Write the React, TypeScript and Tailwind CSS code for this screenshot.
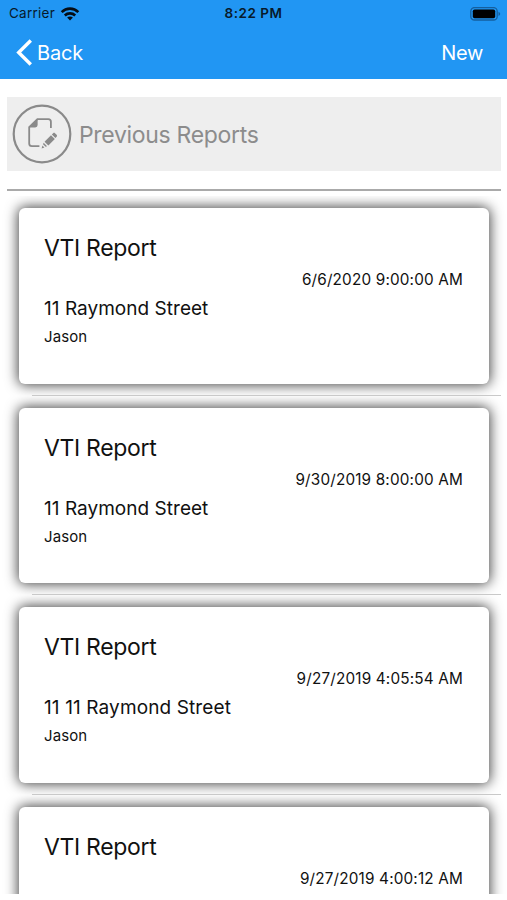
const reports = [
  { date: '6/6/2020 9:00:00 AM', address: '11 Raymond Street', inspector: 'Jason', addressClass: 'tracking-[0.03px]' },
  { date: '9/30/2019 8:00:00 AM', address: '11 Raymond Street', inspector: 'Jason', addressClass: 'tracking-[0.03px]' },
  { date: '9/27/2019 4:05:54 AM', address: '11 11 Raymond Street', inspector: 'Jason', addressClass: 'tracking-[0.12px]' },
  { date: '9/27/2019 4:00:12 AM', address: '', inspector: '', addressClass: '' },
];

function WifiIcon() {
  return (
    <svg className="ml-[5px] h-[14px] w-[20px]" viewBox="0 0 19 14" fill="none" stroke="#050d16" strokeWidth="2.6">
      <path d="M1.2 5.1C5.8.5 13.2.5 17.8 5.1" />
      <path d="M4.3 8.5c2.9-2.8 7.5-2.8 10.4 0" />
      <path d="M9.5 13.4 6.6 10.6c1.6-1.5 4.2-1.5 5.8 0z" fill="#050d16" stroke="none" />
    </svg>
  );
}

function BatteryIcon() {
  return (
    <svg className="h-[14px] w-[31px]" viewBox="0 0 31 14">
      <rect x="0.8" y="0.6" width="26.4" height="12.4" rx="3.6" fill="none" stroke="#155f9e" strokeWidth="1.3" />
      <rect x="2.8" y="2.5" width="22.4" height="8.8" rx="1.8" fill="#000" />
      <path d="M28.5 4.7c2.2.8 2.2 3.4 0 4.2z" fill="#155f9e" />
    </svg>
  );
}

function ReportIcon() {
  return (
    <svg className="h-[60px] w-[60px]" viewBox="0 0 60 60" fill="none" stroke="#8a8a8a">
      <circle cx="30" cy="30" r="28.3" strokeWidth="2.2" />
      <path d="M38.9 24V17.8a2.6 2.6 0 0 0-2.6-2.6H25.4L17.2 23.2v16.3a2.6 2.6 0 0 0 2.6 2.6h7.6" strokeWidth="1.8" />
      <path d="M25.6 15v6.1a2.4 2.4 0 0 1-2.4 2.4H17z" fill="#8a8a8a" stroke="none" />
      <g fill="#8a8a8a" stroke="none" transform="translate(6.7 5.5) scale(0.85)">
        <path d="M30.4 37.8 38 30.2l4.5 4.5-7.6 7.6z" />
        <path d="m39 29.3 1.5-1.4c.7-.7 1.6-.6 2.2 0l1.9 1.9c.7.7.7 1.6 0 2.2L43.2 33.5z" />
        <path d="m29.4 39.2 4 4-1.8.7-3-2.9z" />
        <path d="m27.9 42.3 2.3 2.3-3.2 1.2z" />
      </g>
    </svg>
  );
}

export default function App() {
  return (
    <div className="flex h-[900px] w-[507px] flex-col overflow-hidden bg-white font-['Inter','Liberation_Sans',sans-serif] text-[#111]">
      <header className="h-[79px] shrink-0 bg-[#2196f3]">
        <div className="grid h-[27px] grid-cols-3 items-center text-[13.5px] leading-[27px] text-[#071a2b]">
          <div className="flex items-center pl-[9px]">
            <span className="tracking-[0.25px]">Carrier</span>
            <WifiIcon />
          </div>
          <div className="text-center font-semibold tracking-[0.5px]">8:22 PM</div>
          <div className="flex justify-end pr-[6px]">
            <BatteryIcon />
          </div>
        </div>
        <div className="flex h-[51px] items-center justify-between pr-[24px] pl-[16px] text-[20px] text-white">
          <div className="flex items-center gap-[5px]">
            <svg className="h-[27px] w-[16px]" viewBox="0 0 16 27" fill="none" stroke="currentColor" strokeWidth="3.4">
              <path d="M14.8 1.5 2.7 13.5l12.1 12" />
            </svg>
            <span className="tracking-[-0.2px]">Back</span>
          </div>
          <span className="tracking-[-0.3px]">New</span>
        </div>
      </header>

      <section className="mt-[18px] mr-[6px] ml-[7px] flex h-[73.5px] shrink-0 items-center bg-[#eeeeee] pl-[5px]">
        <ReportIcon />
        <h1 className="ml-[7px] pt-[2px] text-[23px] tracking-[-0.32px] text-[#8c8c8c]">Previous Reports</h1>
      </section>
      <div className="mt-[18px] mr-[6px] ml-[7px] h-[2px] shrink-0 bg-[#aaaaaa]" />

      <main className="h-[703.5px] shrink-0 overflow-hidden pt-[5.5px]">
        {reports.map((report) => (
          <article key={report.date} className="flex h-[199.6px] flex-col overflow-hidden">
            <div className="mt-[12px] mr-[18px] ml-[19px] h-[175.6px] shrink-0 rounded-[6px] bg-white pt-[24px] pr-[26px] pl-[25px] shadow-[0_0_13px_1px_rgba(0,0,0,0.75)]">
              <h2 className="text-[23px] leading-[32px] tracking-[-0.32px]">VTI Report</h2>
              <p className="mt-[6px] text-right text-[15.3px] leading-[20px] tracking-[0.17px]">{report.date}</p>
              <p className={`mt-[6px] h-[26px] text-[19px] leading-[26px] ${report.addressClass}`}>{report.address}</p>
              {report.inspector && (
                <p className="mt-[5px] text-[15px] leading-[20px] tracking-[0.1px]">{report.inspector}</p>
              )}
            </div>
            <div className="mt-auto mr-[6px] ml-[32px] h-px shrink-0 bg-[#c9c9c9]" />
          </article>
        ))}
      </main>
    </div>
  );
}
